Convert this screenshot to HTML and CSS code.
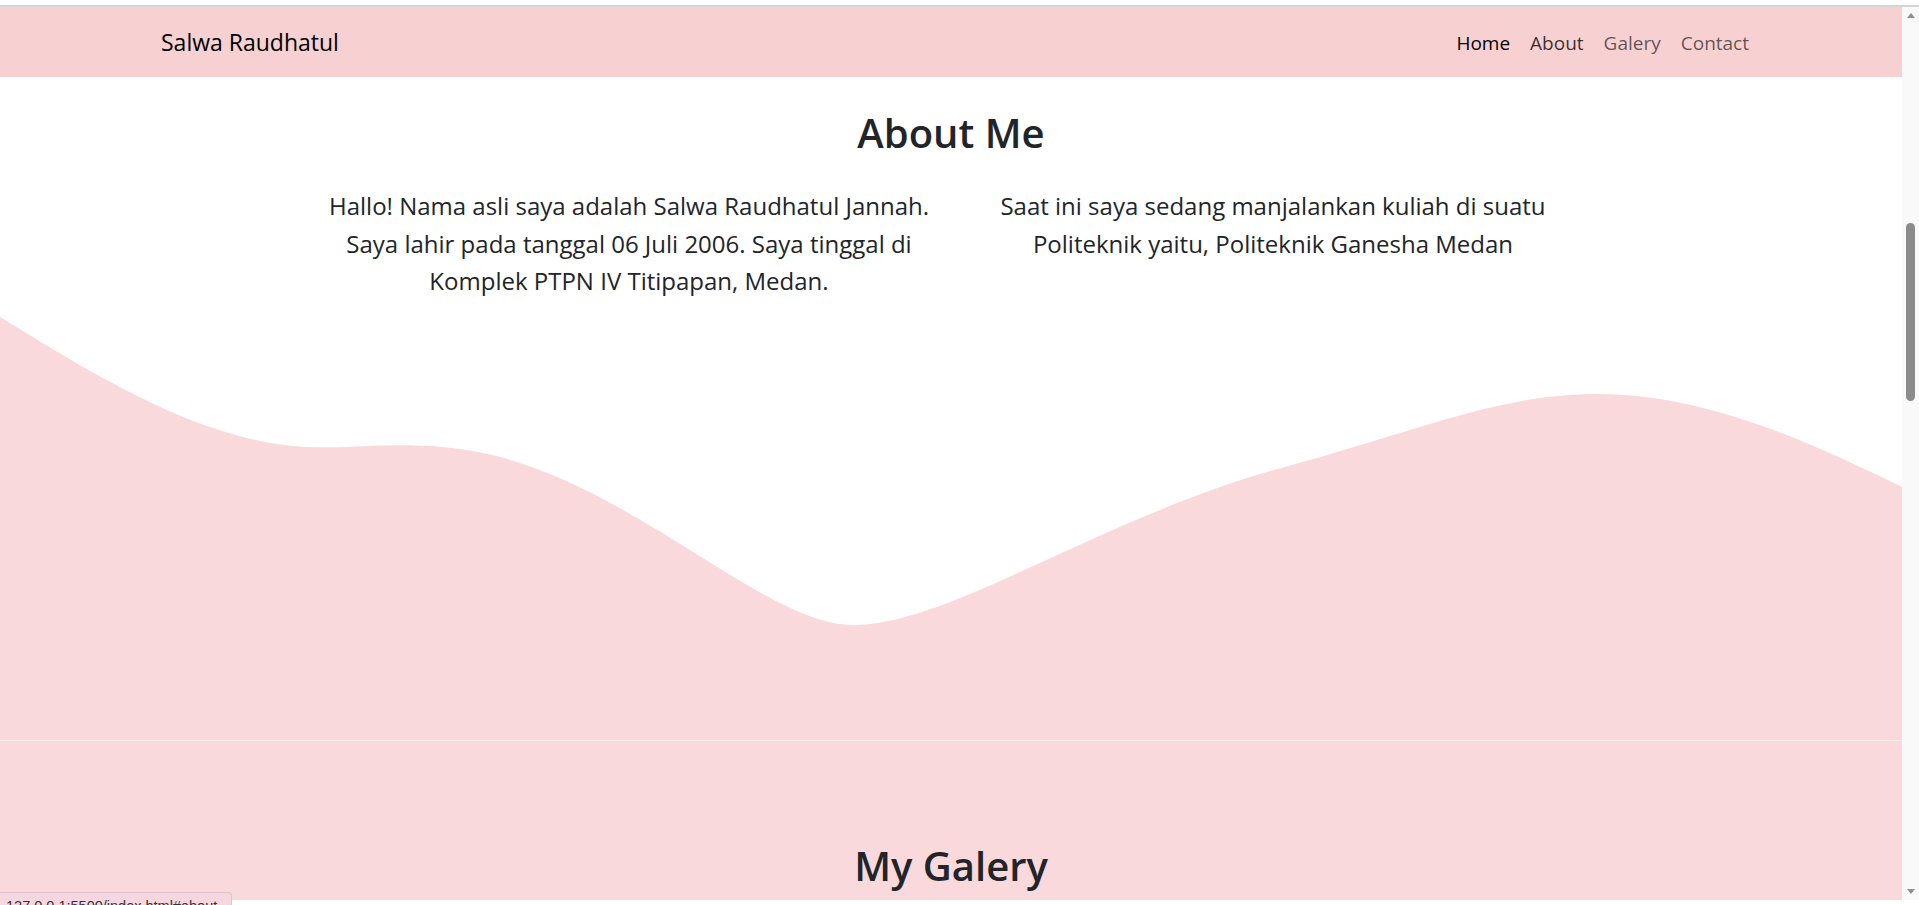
FILE: index.html
```html
<!DOCTYPE html>
<html lang="id">
<head>
<meta charset="utf-8">
<title>Salwa Raudhatul</title>
<link rel="stylesheet" href="styles.css">
</head>
<body>
<div class="frame-top"></div>
<div class="window">
  <div class="viewport">
    <nav class="navbar">
      <a class="brand" href="#">Salwa Raudhatul</a>
      <ul class="nav-links">
        <li><a class="nav-link active" href="#home">Home</a></li>
        <li><a class="nav-link hover" href="#about">About</a></li>
        <li><a class="nav-link" href="#galery">Galery</a></li>
        <li><a class="nav-link" href="#contact">Contact</a></li>
      </ul>
    </nav>
    <section class="about" id="about">
      <h1 class="section-title">About Me</h1>
      <div class="about-row">
        <p class="about-text">Hallo! Nama asli saya adalah Salwa Raudhatul Jannah.<br>Saya lahir pada tanggal 06 Juli 2006. Saya tinggal di<br>Komplek PTPN IV Titipapan, Medan.</p>
        <p class="about-text">Saat ini saya sedang manjalankan kuliah di suatu<br>Politeknik yaitu, Politeknik Ganesha Medan</p>
      </div>
      <svg class="wave" viewBox="0 0 1902 423" preserveAspectRatio="none" xmlns="http://www.w3.org/2000/svg">
        <path d="M0,0 C90,55 200,125 306,130 C360,132 400,124 460,132 C620,153 760,308 853,308 C950,308 1100,200 1285,150 C1420,113 1500,77 1597,77 C1700,77 1800,120 1902,170 L1902,423 L0,423 Z"/>
      </svg>
    </section>
    <section class="gallery" id="galery">
      <h1 class="section-title">My Galery</h1>
    </section>
  </div>
  <div class="scrollbar">
    <span class="arrow arrow-up"></span>
    <div class="track"><div class="thumb"></div></div>
    <span class="arrow arrow-down"></span>
  </div>
</div>
<div class="frame-bottom"></div>
<div class="status-bubble">127.0.0.1:5500/index.html#about</div>
</body>
</html>
```
FILE: styles.css
```css
* { box-sizing: border-box; }

html, body {
  margin: 0;
  height: 905px;
  overflow: hidden;
}

body {
  font-family: "Open Sans", "Noto Sans", sans-serif;
  color: #212529;
  background: #ffffff;
  display: flex;
  flex-direction: column;
  position: relative;
}

.frame-top {
  height: 7px;
  flex: none;
  background: #ffffff;
  border-bottom: 2px solid #d4d4d4;
}

.window {
  height: 893px;
  flex: none;
  display: flex;
}

.viewport {
  flex: 1;
  min-width: 0;
  overflow: hidden;
  display: flex;
  flex-direction: column;
}

.navbar {
  height: 70px;
  flex: none;
  background: #f7d0d2;
  display: flex;
  align-items: center;
  justify-content: space-between;
  padding: 0 143px 0 161px;
}

.brand {
  font-size: 23px;
  color: #000000;
  text-decoration: none;
  line-height: 1;
  padding-top: 1px;
}

.nav-links {
  list-style: none;
  margin: 0;
  padding: 0;
  display: flex;
}

.nav-link {
  display: block;
  padding: 2px 10px 0;
  font-size: 19px;
  text-decoration: none;
  color: rgba(0, 0, 0, 0.62);
}

.nav-link.active { color: #000000; }
.nav-link.hover { color: rgba(0, 0, 0, 0.78); }

.about {
  flex: none;
  background: #ffffff;
  padding-top: 32px;
  display: flex;
  flex-direction: column;
}

.section-title {
  margin: 0;
  font-size: 40px;
  line-height: 48px;
  font-weight: 600;
  text-align: center;
  color: #212529;
}

.about-row {
  display: flex;
  justify-content: center;
  gap: 24px;
  margin-top: 30px;
}

.about-text {
  margin: 0;
  width: 620px;
  font-size: 24px;
  line-height: 37.5px;
  text-align: center;
  white-space: nowrap;
  color: #212529;
}

.wave {
  display: block;
  width: 100%;
  height: 423px;
  margin-top: 17.5px;
  fill: #f9d9dc;
}

.gallery {
  flex: 1;
  background: #f9d9dc;
  border-top: 1px solid #fcebec;
  padding-top: 101px;
}

.scrollbar {
  width: 17px;
  flex: none;
  background: #f9f9f9;
  display: flex;
  flex-direction: column;
}

.arrow {
  height: 17px;
  flex: none;
  display: flex;
  align-items: center;
  justify-content: center;
}

.arrow::before {
  content: "";
  width: 0;
  height: 0;
  border-left: 4.5px solid transparent;
  border-right: 4.5px solid transparent;
}

.arrow-up::before { border-bottom: 5px solid #8f8f8f; }
.arrow-down::before { border-top: 5px solid #8f8f8f; }

.track {
  flex: 1;
  display: flex;
  justify-content: center;
}

.thumb {
  width: 9px;
  height: 178px;
  margin-top: 199px;
  border-radius: 5px;
  background: #8b8b8b;
}

.frame-bottom {
  flex: 1;
  background: #ffffff;
}

.status-bubble {
  position: absolute;
  left: 0;
  top: 892px;
  width: 232px;
  height: 22px;
  padding: 5px 0 0 6px;
  background: #f6d7e0;
  border: 1px solid #dcc3ca;
  border-left: none;
  border-top-right-radius: 4px;
  font-family: "Liberation Sans", sans-serif;
  font-size: 14.5px;
  line-height: 16px;
  color: #333333;
  white-space: nowrap;
  overflow: hidden;
}
```
